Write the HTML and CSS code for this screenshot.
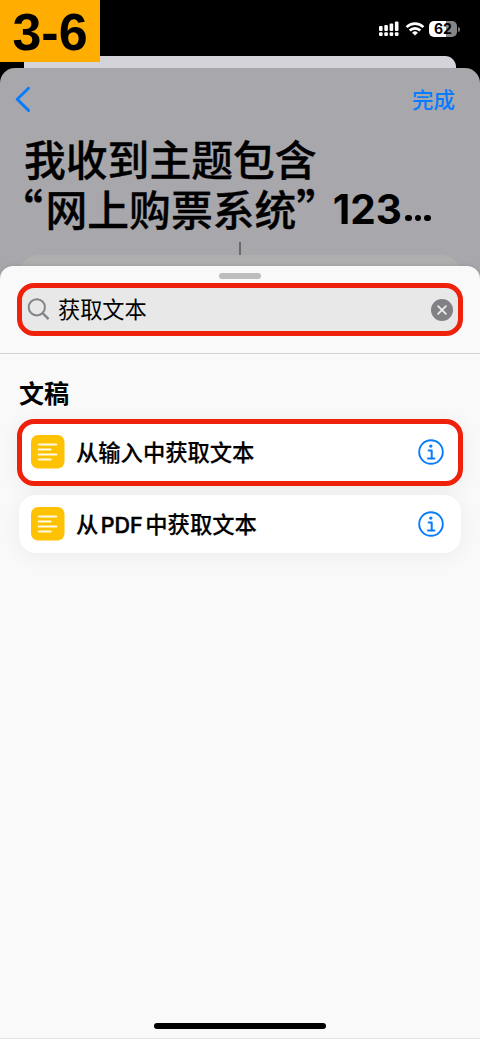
FILE: index.html
```
<!DOCTYPE html>
<html lang="zh-CN">
<head>
<meta charset="utf-8">
<meta name="viewport" content="width=device-width">
<title>获取文本</title>
<link rel="stylesheet" href="styles.css">
</head>
<body>
<div class="phone">
  <header class="status">
    <div class="step">3-6</div>
    <div class="indicators">
      <svg class="signal" width="20" height="16" viewBox="0 0 20 16" fill="#fff">
        <rect x="0" y="5" width="3.6" height="5" rx="1"/><rect x="5.3" y="4" width="3.6" height="6" rx="1"/><rect x="10.6" y="2.5" width="3.6" height="7.5" rx="1"/><rect x="15.9" y="0.5" width="3.6" height="9.5" rx="1"/>
        <rect x="0" y="11.3" width="3.6" height="3.7" rx="1"/><rect x="5.3" y="11.3" width="3.6" height="3.7" rx="1"/><rect x="10.6" y="11.3" width="3.6" height="3.7" rx="1"/><rect x="15.9" y="11.3" width="3.6" height="3.7" rx="1"/>
      </svg>
      <svg class="wifi" width="20" height="16" viewBox="0 0 20 16" fill="none" stroke="#fff" stroke-width="2.7">
        <path d="M1.6 6.1a12 12 0 0 1 16.8 0"/><path d="M4.7 9.5a7.6 7.6 0 0 1 10.6 0"/><path d="M10 14.6 7.1 11.7a4.2 4.2 0 0 1 5.8 0z" fill="#fff" stroke="none"/>
      </svg>
      <div class="battery">62</div>
      <div class="battery-tip"></div>
    </div>
  </header>
  <div class="back-card"></div>
  <main class="editor">
    <nav class="nav">
      <svg width="16" height="26" viewBox="0 0 16 26" fill="none" stroke="#087bfe" stroke-width="2.9" stroke-linecap="round" stroke-linejoin="round"><path d="M13.5 2.2 2.2 13.3 13.5 24.4"/></svg>
      <span class="done">完成</span>
    </nav>
    <h1 class="title">
      <span class="title-line">我收到主题包含</span>
      <span class="title-line"><span class="quote open">“</span><span>网上购票系统</span><span class="quote">”</span><span class="number">123</span><span class="dots"><i></i><i></i><i></i></span></span>
    </h1>
    <div class="connector"></div>
    <div class="action-clip"><div class="action"></div></div>
    <section class="sheet">
      <div class="grabber"></div>
      <div class="search">
        <svg width="23" height="23" viewBox="0 0 23 23" fill="none" stroke="#858589" stroke-width="2"><circle cx="9.8" cy="9.3" r="8.1"/><path d="m15.6 15.1 6 6" stroke-width="2.4"/></svg>
        <span class="query">获取文本</span>
        <svg width="22" height="22" viewBox="0 0 22 22"><circle cx="11" cy="11" r="11" fill="#808085"/><path d="m7.1 7.1 7.8 7.8m0-7.8-7.8 7.8" stroke="#ececec" stroke-width="1.8" stroke-linecap="round"/></svg>
      </div>
      <div class="divider"></div>
      <h2 class="heading">文稿</h2>
      <div class="row selected">
        <svg width="34" height="34" viewBox="0 0 34 34"><rect width="33.5" height="33.5" rx="7" fill="#ffc200"/><path d="M7.7 9.6h17.6M7.7 14.5h12M7.7 19.5h17.6M7.7 24.5h12" stroke="#fff9e8" stroke-width="2" stroke-linecap="round"/></svg>
        <span class="label">从输入中获取文本</span>
        <svg width="26" height="26" viewBox="0 0 26 26" fill="none" stroke="#087bfe"><circle cx="13" cy="13" r="11.8" stroke-width="1.9"/><circle cx="12.8" cy="7.1" r="1.7" fill="#087bfe" stroke="none"/><path d="M10.7 11.5h3v7.6M10 19.4h6.4" stroke-width="2" stroke-linecap="round" stroke-linejoin="round"/></svg>
      </div>
      <div class="row">
        <svg width="34" height="34" viewBox="0 0 34 34"><rect width="33.5" height="33.5" rx="7" fill="#ffc200"/><path d="M7.7 9.6h17.6M7.7 14.5h12M7.7 19.5h17.6M7.7 24.5h12" stroke="#fff9e8" stroke-width="2" stroke-linecap="round"/></svg>
        <span class="label">从<span class="latin">PDF</span>中获取文本</span>
        <svg width="26" height="26" viewBox="0 0 26 26" fill="none" stroke="#087bfe"><circle cx="13" cy="13" r="11.8" stroke-width="1.9"/><circle cx="12.8" cy="7.1" r="1.7" fill="#087bfe" stroke="none"/><path d="M10.7 11.5h3v7.6M10 19.4h6.4" stroke-width="2" stroke-linecap="round" stroke-linejoin="round"/></svg>
      </div>
      <div class="home-bar"></div>
    </section>
  </main>
</div>
</body>
</html>
```
FILE: styles.css
```
* { box-sizing: border-box; }
body { margin: 0; background: #000; color: #000; font-family: Inter, "Noto Sans CJK SC", sans-serif; }
svg { display: block; flex: none; }
.phone { height: 1039px; display: flex; flex-direction: column; overflow: hidden; background: #000; }
.status { height: 56px; flex: none; display: flex; justify-content: space-between; align-items: flex-start; }
.step { position: relative; z-index: 1; width: 100px; height: 61.5px; flex: none; background: #ffad00; font: bold 52px/64px "Liberation Sans", Arial, sans-serif; text-align: center; }
.indicators { display: flex; align-items: center; padding: 21px 20px 0 0; }
.wifi { margin: 0 4px 0 6px; }
.battery { width: 28px; height: 16px; border-radius: 5px; background: linear-gradient(90deg, #fff 62%, #858585 62%); font: bold 14px/16px Inter, sans-serif; text-align: center; }
.battery-tip { width: 2px; height: 5px; margin-left: 1px; border-radius: 0 2px 2px 0; background: #777; }
.back-card { height: 11.5px; flex: none; margin: 0 24px; border-radius: 0 11px 0 0; background: #d4d3d9; }
.editor { flex: 1; display: flex; flex-direction: column; border-radius: 15px 15px 0 0; background: #a8a7ac; }
.nav { height: 63px; flex: none; display: flex; align-items: center; justify-content: space-between; padding: 0 25px 0 15px; color: #087bfe; }
.done { font: 500 21.5px/30px "Noto Sans CJK SC", sans-serif; }
.title { height: 111px; flex: none; margin: 0; padding: 2px 24px 0; font: 500 41.8px/50px "Noto Sans CJK SC", sans-serif; -webkit-text-stroke: .35px #000; white-space: nowrap; }
.title-line { display: flex; height: 50px; }
.quote { width: 21.5px; font-size: 46px; font-feature-settings: "halt"; }
.quote.open { width: 25.5px; margin-left: -4px; }
.number { margin-left: 15px; font: bold 40.5px/53px Inter, sans-serif; -webkit-text-stroke: 0; }
.dots { display: flex; gap: 2.8px; align-items: flex-start; padding: 32px 0 0 3px; }
.dots i { width: 6.8px; height: 6.8px; border-radius: 50%; background: #000; }
.connector { width: 2px; height: 13px; flex: none; margin: 0 auto; background: #69696c; }
.action-clip { height: 11px; flex: none; overflow: hidden; padding: 0 19px; }
.action { height: 40px; border-radius: 22px; background: #afafaf; }
.sheet { flex: 1; display: flex; flex-direction: column; border-radius: 13px 13px 0 0; border-bottom: 1px solid #e4e4e4; background: #f9f9f9; box-shadow: 0 0 5px rgba(0,0,0,.12); }
.grabber { width: 42px; height: 6px; flex: none; margin: 7px auto 4.5px; border-radius: 3px; background: #bdbdbe; }
.search { height: 53px; flex: none; display: flex; align-items: center; margin: 0 17px; padding: 0 5px; border: 5px solid #ef210b; border-radius: 17px; background: #e8e8e8; }
.query { flex: 1; padding: 0 0 3px 8px; font: 400 22.2px/32px "Noto Sans CJK SC", sans-serif; }
.divider { height: 1px; flex: none; margin-top: 17px; background: #d4d4d5; }
.heading { height: 65px; flex: none; margin: 0; padding: 20px 19px 0; font: bold 25px/36px "Noto Sans CJK SC", sans-serif; }
.row { height: 58px; flex: none; display: flex; align-items: center; margin: 9px 19px 0; padding: 0 17px 0 12px; border-radius: 17px; background: #fff; box-shadow: 0 3px 20px rgba(0,0,0,.055); }
.row.selected { height: 67px; margin: 0 17px; padding: 0 14px 1px 9px; border: 5px solid #ef210b; }
.label { flex: 1; padding: 0 0 3px 11px; font: 500 22.3px/32px "Noto Sans CJK SC", sans-serif; -webkit-text-stroke: .2px #000; }
.row:not(.selected) .label { padding-bottom: 1px; }
.latin { padding: 0 2.5px; font: 500 21.5px/30px Inter, sans-serif; -webkit-text-stroke: .5px #000; }
.home-bar { width: 172px; height: 6px; flex: none; margin: auto auto 9px; border-radius: 3px; background: #000; }
```
